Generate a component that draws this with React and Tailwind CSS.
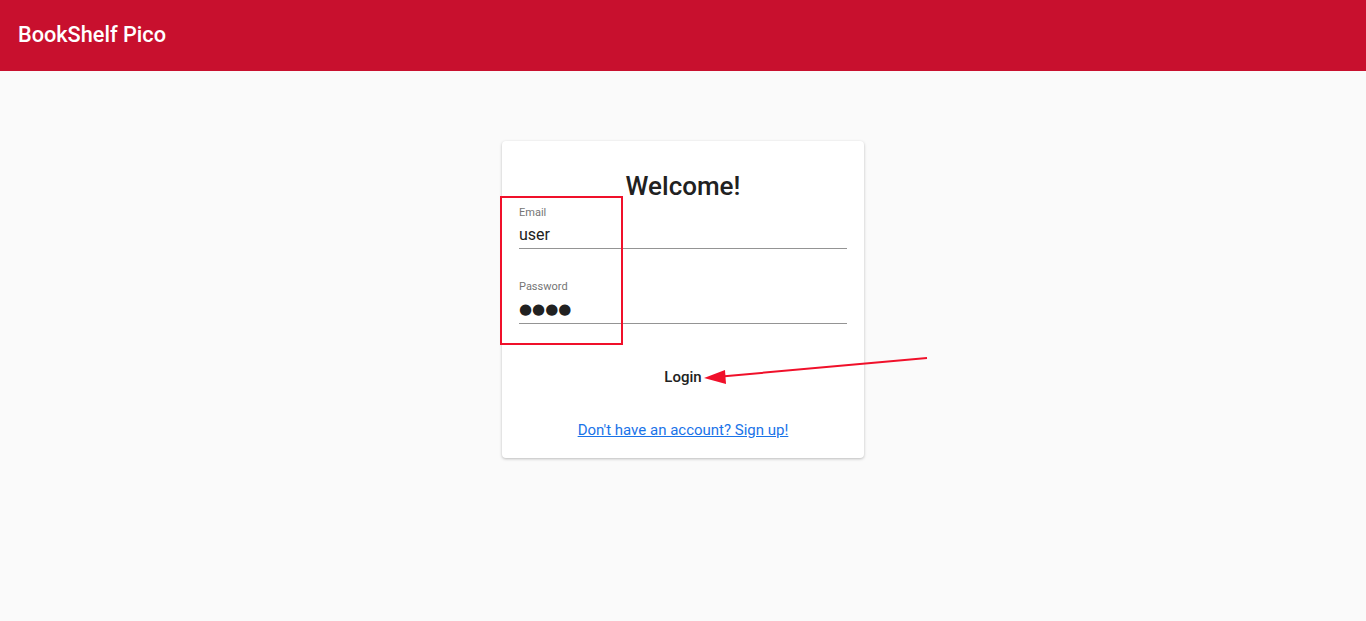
import React from "react";

export default function App() {
  return (
    <div className="relative min-h-[621px] bg-[#fafafa] font-['Roboto',sans-serif] text-[#212121]">
      <header className="flex h-[71px] items-center bg-[#c8102e] px-[18px]">
        <h1 className="text-[21.7px] font-medium text-white">BookShelf Pico</h1>
      </header>

      <main className="flex justify-center">
        <div className="mt-[70px] w-[362px] rounded-[4px] bg-white px-[17px] pt-[29px] pb-[18px] shadow-[0_1px_3px_rgba(0,0,0,0.25)]">
          <h2 className="text-center text-[26px] font-medium leading-[32px]">Welcome!</h2>

          <div className="mt-[3px]">
            <label className="block text-[11px] leading-[16px] text-[#757575]">Email</label>
            <div className="flex h-[28px] items-center border-b border-[#949494] text-[16px]">
              user
            </div>
          </div>

          <div className="mt-[30px]">
            <label className="block text-[11px] leading-[16px] text-[#757575]">Password</label>
            <div className="flex h-[29px] items-center border-b border-[#949494] font-['DejaVu_Sans',sans-serif] text-[15px] leading-none">
              ●●●●
            </div>
          </div>

          <div className="mt-[35px] flex justify-center">
            <button className="h-[36px] px-4 text-[15px] font-medium">Login</button>
          </div>

          <div className="mt-[25px] text-center text-[15px] leading-[20px]">
            <a href="#" className="text-[#1a73e8] underline">
              Don't have an account? Sign up!
            </a>
          </div>
        </div>
      </main>

      {/* annotation overlays */}
      <div className="pointer-events-none absolute left-[500px] top-[196px] h-[149px] w-[123px] border-2 border-[#f0102a]" />
      <svg className="pointer-events-none absolute left-0 top-0" width="1366" height="621">
        <line x1="927" y1="358" x2="716" y2="377" stroke="#f0102a" strokeWidth="2" />
        <polygon points="704,378 725,370 726,384" fill="#f0102a" />
      </svg>
    </div>
  );
}
